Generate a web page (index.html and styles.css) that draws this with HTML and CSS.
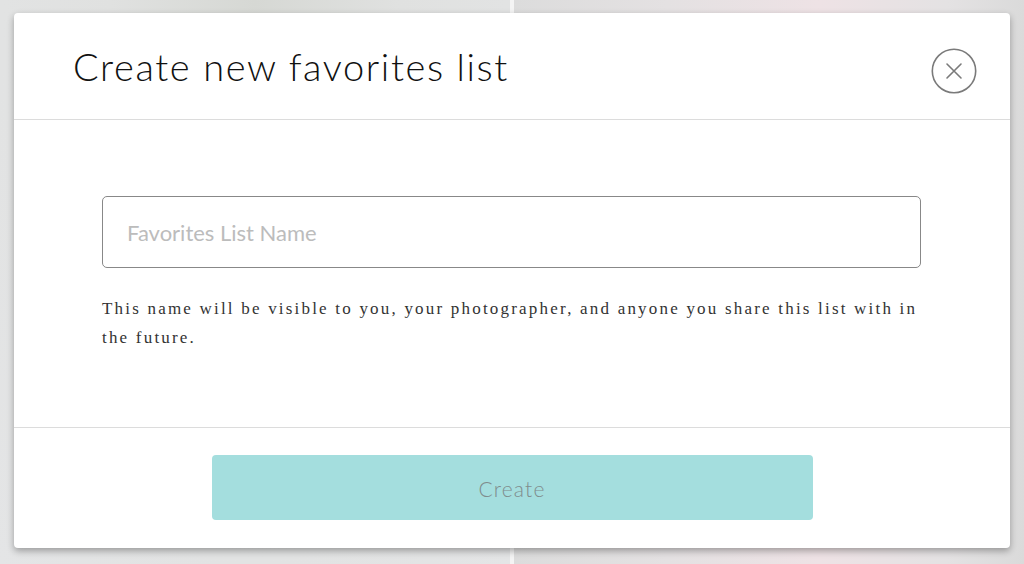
FILE: index.html
```html
<!DOCTYPE html>
<html>
<head>
<meta charset="utf-8">
<link rel="stylesheet" href="styles.css">
</head>
<body>
<div class="backdrop">
  <div class="photo photo-left"></div>
  <div class="photo photo-right"></div>
</div>
<div class="overlay">
  <div class="modal">
    <div class="modal-header">
      <h1 class="title">Create new favorites list</h1>
      <button class="close" aria-label="Close">
        <svg width="46" height="46" viewBox="0 0 46 46">
          <circle cx="23" cy="23" r="21.7" fill="none" stroke="#7a7a7a" stroke-width="1.6"/>
          <path d="M16 16 L30 30 M30 16 L16 30" stroke="#7a7a7a" stroke-width="1.6" stroke-linecap="round"/>
        </svg>
      </button>
    </div>
    <div class="modal-body">
      <div class="field">Favorites List Name</div>
      <p class="help">This name will be visible to you, your photographer, and anyone you share this list with in the future.</p>
    </div>
    <div class="modal-footer">
      <button class="create">Create</button>
    </div>
  </div>
</div>
</body>
</html>
```

FILE: styles.css
```css
html, body {
  margin: 0;
  padding: 0;
  width: 1024px;
  height: 564px;
  overflow: hidden;
}
body {
  position: relative;
  font-family: Lato, "Liberation Sans", sans-serif;
}
.backdrop {
  display: flex;
  gap: 4px;
  width: 1024px;
  height: 564px;
  background: #f4f4f4;
}
.photo {
  flex: 1;
  height: 100%;
}
.photo-left {
  background: radial-gradient(ellipse at 50% 0%, #d6d8d4 0%, #e0e1e0 40%, #e4e5e6 100%);
}
.photo-right {
  background: linear-gradient(90deg, #dcdcdc 0%, #e4e1e2 30%, #eee2e5 60%, #e4e2e3 85%, #dadada 100%);
}
.overlay {
  position: absolute;
  inset: 0;
  display: flex;
  justify-content: center;
  padding-top: 13px;
}
.modal {
  width: 996px;
  height: 535px;
  background: #fff;
  border-radius: 4px;
  box-shadow: 0 3px 7px rgba(0,0,0,0.32);
  display: flex;
  flex-direction: column;
}
.modal-header {
  height: 106px;
  border-bottom: 1px solid #dcdcdc;
  display: flex;
  align-items: center;
  justify-content: space-between;
  padding: 0 33px 0 59px;
}
.title {
  margin: 0;
  font-family: Lato, sans-serif;
  font-weight: 300;
  font-size: 38px;
  letter-spacing: 1.6px;
  color: #111;
  padding-top: 0;
}
.close {
  background: none;
  border: none;
  padding: 0;
  margin-top: 9px;
  width: 46px;
  height: 46px;
  display: flex;
}
.modal-body {
  height: 308px;
  border-bottom: 1px solid #dcdcdc;
  padding: 76px 89px 0 88px;
  box-sizing: border-box;
}
.field {
  height: 72px;
  border: 1px solid #888;
  border-radius: 5px;
  box-sizing: border-box;
  display: flex;
  align-items: center;
  padding-left: 24px;
  font-size: 22px;
  color: #bcbcbc;
}
.help {
  margin: 26px 0 0;
  font-family: "Liberation Serif", serif;
  font-size: 17px;
  letter-spacing: 2.2px;
  line-height: 29px;
  color: #333;
}
.modal-footer {
  flex: 1;
  display: flex;
  justify-content: center;
  padding-top: 27px;
}
.create {
  width: 601px;
  height: 65px;
  background: #a4dede;
  border: none;
  border-radius: 4px;
  font-family: Lato, sans-serif;
  font-weight: 300;
  font-size: 21px;
  letter-spacing: 1.2px;
  color: #7f8c8c;
  padding-top: 2px;
}
```
